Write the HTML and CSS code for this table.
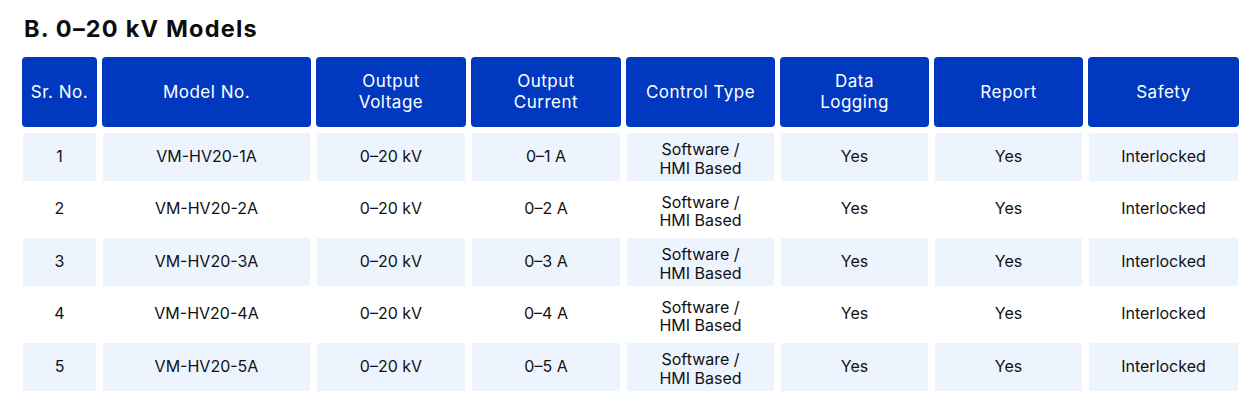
FILE: index.html
```html
<!DOCTYPE html>
<html lang="en">
<head>
<meta charset="utf-8">
<title>B. 0–20 kV Models</title>
<link rel="stylesheet" href="styles.css">
</head>
<body>
<section class="section">
  <h2 class="title">B. 0–20 kV Models</h2>
  <div class="table">
    <div class="row head">
      <div class="cell">Sr. No.</div>
      <div class="cell">Model No.</div>
      <div class="cell">Output<br>Voltage</div>
      <div class="cell">Output<br>Current</div>
      <div class="cell">Control Type</div>
      <div class="cell">Data<br>Logging</div>
      <div class="cell">Report</div>
      <div class="cell">Safety</div>
    </div>
    <div class="row body shaded">
      <div class="cell">1</div>
      <div class="cell">VM-HV20-1A</div>
      <div class="cell">0–20 kV</div>
      <div class="cell">0–1 A</div>
      <div class="cell two">Software /<br>HMI Based</div>
      <div class="cell">Yes</div>
      <div class="cell">Yes</div>
      <div class="cell">Interlocked</div>
    </div>
    <div class="row body">
      <div class="cell">2</div>
      <div class="cell">VM-HV20-2A</div>
      <div class="cell">0–20 kV</div>
      <div class="cell">0–2 A</div>
      <div class="cell two">Software /<br>HMI Based</div>
      <div class="cell">Yes</div>
      <div class="cell">Yes</div>
      <div class="cell">Interlocked</div>
    </div>
    <div class="row body shaded">
      <div class="cell">3</div>
      <div class="cell">VM-HV20-3A</div>
      <div class="cell">0–20 kV</div>
      <div class="cell">0–3 A</div>
      <div class="cell two">Software /<br>HMI Based</div>
      <div class="cell">Yes</div>
      <div class="cell">Yes</div>
      <div class="cell">Interlocked</div>
    </div>
    <div class="row body">
      <div class="cell">4</div>
      <div class="cell">VM-HV20-4A</div>
      <div class="cell">0–20 kV</div>
      <div class="cell">0–4 A</div>
      <div class="cell two">Software /<br>HMI Based</div>
      <div class="cell">Yes</div>
      <div class="cell">Yes</div>
      <div class="cell">Interlocked</div>
    </div>
    <div class="row body shaded">
      <div class="cell">5</div>
      <div class="cell">VM-HV20-5A</div>
      <div class="cell">0–20 kV</div>
      <div class="cell">0–5 A</div>
      <div class="cell two">Software /<br>HMI Based</div>
      <div class="cell">Yes</div>
      <div class="cell">Yes</div>
      <div class="cell">Interlocked</div>
    </div>
  </div>
</section>
</body>
</html>
```

FILE: styles.css
```css
* { box-sizing: border-box; }
html, body { margin: 0; padding: 0; background: #ffffff; }
body {
  font-family: Inter, "Noto Sans", "Liberation Sans", sans-serif;
  color: #111111;
}
.section {
  padding: 14px 15px 0 22px;
}
.title {
  margin: 0 0 14px 2px;
  font-family: Inter, "Noto Sans", sans-serif;
  font-weight: 700;
  font-size: 23.5px;
  line-height: 29px;
  letter-spacing: 1.2px;
  color: #0d0d0d;
}
.table {
  display: flex;
  flex-direction: column;
  gap: 4.5px;
  width: 1217px;
}
.row {
  display: grid;
  grid-template-columns: 75px 209px 150px 150px 149px 149px 149px 151px;
  column-gap: 5px;
}
.head {
  height: 70px;
  margin-bottom: 1.5px;
}
.head .cell {
  background: #0039bf;
  color: #ffffff;
  border-radius: 4px;
  font-size: 17px;
  line-height: 21px;
  font-weight: 400;
  letter-spacing: 0.5px;
  display: flex;
  align-items: center;
  justify-content: center;
  text-align: center;
}
.body {
  height: 48px;
}
.body .cell {
  margin: 0 1px 0 1px;
  font-size: 16px;
  line-height: 18.5px;
  font-weight: 400;
  color: #111111;
  display: flex;
  align-items: center;
  justify-content: center;
  text-align: center;
  padding-bottom: 2px;
}
.body .cell.two {
  padding-bottom: 0;
  padding-top: 3px;
}
.shaded .cell {
  background: #edf4fe;
}
```
